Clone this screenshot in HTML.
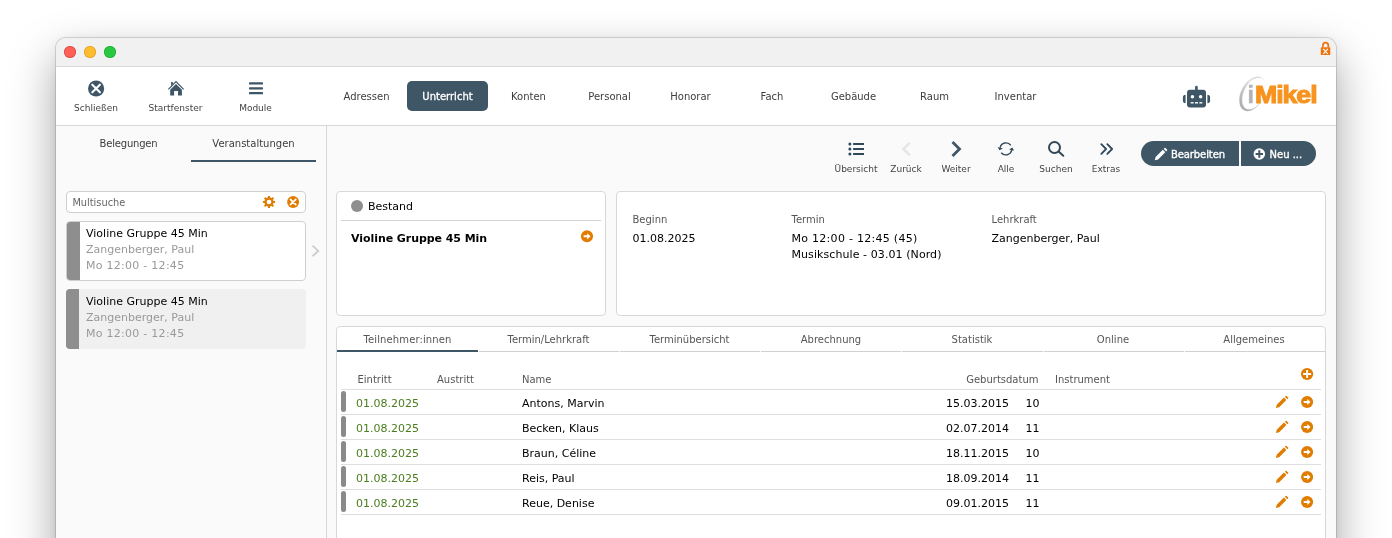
<!DOCTYPE html>
<html lang="de">
<head>
<meta charset="utf-8">
<title>iMikel – Unterricht</title>
<style>
*{box-sizing:border-box;margin:0;padding:0}
html,body{width:1392px;height:538px;overflow:hidden;background:#fff}
body{font-family:"DejaVu Sans","Liberation Sans",sans-serif;font-size:11px;color:#000;position:relative}
.abs{position:absolute}
#win{position:absolute;left:56px;top:38px;width:1280px;height:620px;background:#fafafa;border-radius:10px;
 box-shadow:0 0 0 1px rgba(0,0,0,.13),0 19px 46px rgba(0,0,0,.36),0 0 8px rgba(0,0,0,.05);overflow:hidden}
#title{position:absolute;left:0;top:0;width:100%;height:29px;background:#f1f1f1;border-bottom:1px solid #d9d9d9}
.tl{position:absolute;top:8px;width:12px;height:12px;border-radius:50%}
#bar{position:absolute;left:0;top:29px;width:100%;height:59px;background:#fff;border-bottom:1px solid #d8d8d8}
#side{position:absolute;left:0;top:88px;width:271px;height:540px;background:#fafafa;border-right:1px solid #d8d8d8}
.lbl{position:absolute;white-space:nowrap;transform:translate(-50%,-50%);line-height:1}
.t{position:absolute;white-space:nowrap;line-height:1;transform:translateY(-50%)}
.tb{font-size:9px;color:#444}
.mod{font-size:10px;color:#3d3d3d}
.panel{position:absolute;background:#fff;border:1px solid #d8d8d8;border-radius:4px}
.g{color:#555;font-size:10px}
.row{position:absolute;left:285px;width:980px;height:25px;border-bottom:1px solid #dedede}
.row i{position:absolute;left:0;top:1px;width:5px;height:21px;border-radius:2.5px;background:#8a8a8a}
.grn{color:#4b7d1e}
svg{position:absolute;overflow:visible}
</style>
</head>
<body>
<div id="win">
 <div id="title">
  <div class="tl" style="left:8px;background:#ff5f57;box-shadow:inset 0 0 0 .6px rgba(190,50,40,.7)"></div>
  <div class="tl" style="left:28px;background:#febc2e;box-shadow:inset 0 0 0 .6px rgba(200,140,20,.7)"></div>
  <div class="tl" style="left:48px;background:#28c840;box-shadow:inset 0 0 0 .6px rgba(20,150,35,.7)"></div>
 </div>
 <div id="bar"></div>
 <div id="side"></div>
</div>

<!-- everything below is positioned in page coordinates -->
<div id="layer" class="abs" style="left:0;top:0;width:1392px;height:538px;overflow:hidden;will-change:transform">

<!-- left toolbar -->
<span class="lbl tb" style="left:96px;top:108px">Schließen</span>
<span class="lbl tb" style="left:175.5px;top:108px">Startfenster</span>
<span class="lbl tb" style="left:255.5px;top:108px">Module</span>

<!-- module tabs -->
<span class="lbl mod" style="left:366.5px;top:96.5px">Adressen</span>
<div class="abs" style="left:407px;top:81px;width:81px;height:30px;background:#3f5666;border-radius:5px"></div>
<span class="lbl mod" style="left:447.5px;top:96.5px;color:#fff;-webkit-text-stroke:.3px #fff">Unterricht</span>
<span class="lbl mod" style="left:528.5px;top:96.5px">Konten</span>
<span class="lbl mod" style="left:609.5px;top:96.5px">Personal</span>
<span class="lbl mod" style="left:690.5px;top:96.5px">Honorar</span>
<span class="lbl mod" style="left:772px;top:96.5px">Fach</span>
<span class="lbl mod" style="left:853.5px;top:96.5px">Gebäude</span>
<span class="lbl mod" style="left:934.5px;top:96.5px">Raum</span>
<span class="lbl mod" style="left:1015.5px;top:96.5px">Inventar</span>

<!-- sidebar tabs -->
<span class="lbl" style="left:128.5px;top:144px;color:#3c3c3c;font-size:10px;letter-spacing:-.18px">Belegungen</span>
<span class="lbl" style="left:253.5px;top:144px;color:#3c3c3c;font-size:10px">Veranstaltungen</span>
<div class="abs" style="left:191px;top:160px;width:125px;height:2px;background:#3f5666"></div>

<!-- search -->
<div class="abs" style="left:66px;top:191px;width:240px;height:22px;background:#fff;border:1px solid #cfcfcf;border-radius:4px"></div>
<span class="t" style="left:72.4px;top:202.5px;font-size:9.8px;color:#666">Multisuche</span>

<!-- cards -->
<div class="abs" style="left:66px;top:221px;width:240px;height:60px;background:#fff;border:1px solid #cfcfcf;border-radius:4px;overflow:hidden"><div style="width:13px;height:100%;background:#8e8e8e"></div></div>
<span class="t" style="left:86px;top:233px">Violine Gruppe 45 Min</span>
<span class="t" style="left:86px;top:249px;color:#999">Zangenberger, Paul</span>
<span class="t" style="left:86px;top:265px;color:#999;letter-spacing:.27px">Mo 12:00 - 12:45</span>
<div class="abs" style="left:66px;top:289px;width:240px;height:60px;background:#f0f0f0;border-radius:4px;overflow:hidden"><div style="width:13px;height:100%;background:#8e8e8e"></div></div>
<span class="t" style="left:86px;top:301px">Violine Gruppe 45 Min</span>
<span class="t" style="left:86px;top:317px;color:#999">Zangenberger, Paul</span>
<span class="t" style="left:86px;top:333px;color:#999;letter-spacing:.27px">Mo 12:00 - 12:45</span>

<!-- right toolbar -->
<span class="lbl tb" style="left:856px;top:169px;">Übersicht</span>
<span class="lbl tb" style="left:906px;top:169px;">Zurück</span>
<span class="lbl tb" style="left:956px;top:169px;">Weiter</span>
<span class="lbl tb" style="left:1006px;top:169px;">Alle</span>
<span class="lbl tb" style="left:1056px;top:169px;">Suchen</span>
<span class="lbl tb" style="left:1106px;top:169px;">Extras</span>

<div class="abs" style="left:1141px;top:141px;width:98px;height:25px;background:#3f5666;border-radius:12.5px 0 0 12.5px"></div>
<div class="abs" style="left:1241px;top:141px;width:75px;height:25px;background:#3f5666;border-radius:0 12.5px 12.5px 0"></div>
<span class="t" style="left:1171px;top:154.6px;color:#fff;font-size:10px;-webkit-text-stroke:.35px #fff;letter-spacing:-.1px">Bearbeiten</span>
<span class="t" style="left:1269.5px;top:154.6px;color:#fff;font-size:10px;-webkit-text-stroke:.35px #fff">Neu ...</span>

<!-- Bestand panel -->
<div class="panel" style="left:336px;top:191px;width:270px;height:125px"></div>
<div class="abs" style="left:351px;top:199.7px;width:12px;height:12px;border-radius:50%;background:#8e8e8e"></div>
<span class="t" style="left:368px;top:205.7px">Bestand</span>
<div class="abs" style="left:341px;top:220px;width:260px;height:1px;background:#d4d4d4"></div>
<span class="t" style="left:351px;top:237.5px;font-weight:bold;letter-spacing:-.06px">Violine Gruppe 45 Min</span>

<!-- Info panel -->
<div class="panel" style="left:616px;top:191px;width:710px;height:125px"></div>
<span class="t g" style="left:632.5px;top:219.5px">Beginn</span>
<span class="t" style="left:632.5px;top:237.5px">01.08.2025</span>
<span class="t g" style="left:791.5px;top:219.5px">Termin</span>
<span class="t" style="left:791.5px;top:237.5px;letter-spacing:.28px">Mo 12:00 - 12:45 (45)</span>
<span class="t" style="left:791.5px;top:253.5px;letter-spacing:.08px">Musikschule - 03.01 (Nord)</span>
<span class="t g" style="left:991.5px;top:219.5px">Lehrkraft</span>
<span class="t" style="left:991.5px;top:237.5px">Zangenberger, Paul</span>

<!-- Tab panel -->
<div class="panel" style="left:336px;top:326px;width:990px;height:300px"></div>
<span class="lbl g" style="left:407.5px;top:339.5px;letter-spacing:.12px">Teilnehmer:innen</span>
<span class="lbl g" style="left:548.5px;top:339.5px">Termin/Lehrkraft</span>
<span class="lbl g" style="left:689.5px;top:339.5px">Terminübersicht</span>
<span class="lbl g" style="left:831px;top:339.5px">Abrechnung</span>
<span class="lbl g" style="left:972px;top:339.5px">Statistik</span>
<span class="lbl g" style="left:1113px;top:339.5px">Online</span>
<span class="lbl g" style="left:1254px;top:339.5px">Allgemeines</span>
<div class="abs" style="left:337px;top:350px;width:141px;height:2px;background:#3f5666"></div>
<div class="abs" style="left:479px;top:351px;width:140px;height:1px;background:#d0d0d0"></div>
<div class="abs" style="left:620px;top:351px;width:140px;height:1px;background:#d0d0d0"></div>
<div class="abs" style="left:761px;top:351px;width:140px;height:1px;background:#d0d0d0"></div>
<div class="abs" style="left:902px;top:351px;width:141px;height:1px;background:#d0d0d0"></div>
<div class="abs" style="left:1044px;top:351px;width:140px;height:1px;background:#d0d0d0"></div>
<div class="abs" style="left:1185px;top:351px;width:140px;height:1px;background:#d0d0d0"></div>

<!-- Table header -->
<span class="t g" style="left:357.5px;top:380px">Eintritt</span>
<span class="t g" style="left:437px;top:380px">Austritt</span>
<span class="t g" style="left:522px;top:380px">Name</span>
<span class="t g" style="left:1038.5px;top:380px;transform:translate(-100%,-50%)">Geburtsdatum</span>
<span class="t g" style="left:1055px;top:380px">Instrument</span>
<div class="abs" style="left:341px;top:389px;width:980px;height:1px;background:#dedede"></div>

<!-- rows -->
<div class="row" style="top:390px;left:341px"><i></i></div>
<div class="row" style="top:415px;left:341px"><i></i></div>
<div class="row" style="top:440px;left:341px"><i></i></div>
<div class="row" style="top:465px;left:341px"><i></i></div>
<div class="row" style="top:490px;left:341px"><i></i></div>
<span class="t grn" style="left:356px;top:402.5px">01.08.2025</span><span class="t" style="left:522px;top:402.5px">Antons, Marvin</span><span class="t" style="left:946px;top:402.5px">15.03.2015</span><span class="t" style="left:1025.5px;top:402.5px">10</span>
<span class="t grn" style="left:356px;top:427.5px">01.08.2025</span><span class="t" style="left:522px;top:427.5px">Becken, Klaus</span><span class="t" style="left:946px;top:427.5px">02.07.2014</span><span class="t" style="left:1025.5px;top:427.5px">11</span>
<span class="t grn" style="left:356px;top:452.5px">01.08.2025</span><span class="t" style="left:522px;top:452.5px">Braun, Céline</span><span class="t" style="left:946px;top:452.5px">18.11.2015</span><span class="t" style="left:1025.5px;top:452.5px">10</span>
<span class="t grn" style="left:356px;top:477.5px">01.08.2025</span><span class="t" style="left:522px;top:477.5px">Reis, Paul</span><span class="t" style="left:946px;top:477.5px">18.09.2014</span><span class="t" style="left:1025.5px;top:477.5px">11</span>
<span class="t grn" style="left:356px;top:502.5px">01.08.2025</span><span class="t" style="left:522px;top:502.5px">Reue, Denise</span><span class="t" style="left:946px;top:502.5px">09.01.2015</span><span class="t" style="left:1025.5px;top:502.5px">11</span>


<!-- logo -->
<svg width="1392" height="538" viewBox="0 0 1392 538" style="left:0;top:0">
 <defs><linearGradient id="sw" x1=".2" y1="1" x2=".5" y2="0"><stop offset="0" stop-color="#a6a6a6"/><stop offset=".35" stop-color="#c4c4c4"/><stop offset=".7" stop-color="#e4e4e4"/><stop offset="1" stop-color="#d6d6d6"/></linearGradient></defs>
 <g transform="translate(1252.5,93.8) rotate(27)">
  <path fill="url(#sw)" fill-rule="evenodd" d="M0 -18.5A11.5 18.5 0 1 0 0 18.5A11.5 18.5 0 1 0 0 -18.5zM1.1 -17.9A10 17 0 1 1 1.1 16.1A10 17 0 1 1 1.1 -17.9z"/>
 </g>
</svg>
<span class="abs" id="logo-i" style="left:1247.6px;top:83.6px;font-family:'Liberation Sans',sans-serif;font-weight:bold;font-size:23.2px;line-height:1;color:#b2b2b6;white-space:nowrap;-webkit-text-stroke:.4px #b2b2b6">i</span>
<span class="abs" id="logo-m" style="left:1254.8px;top:83.6px;font-family:'Liberation Sans',sans-serif;font-weight:bold;font-size:23.2px;line-height:1;color:#f7931e;white-space:nowrap;letter-spacing:-.9px;-webkit-text-stroke:1px #f7931e;transform-origin:0 0;transform:scaleX(1.15)">Mikel</span>

<!-- icons -->
<svg width="1392" height="538" viewBox="0 0 1392 538" style="left:0;top:0">
<g id="ic-top" fill="#3f5666" stroke="none">
 <circle cx="96.1" cy="88.5" r="8.05"/>
 <path d="M92.3 84.7l7.6 7.6M99.9 84.7l-7.6 7.6" stroke="#fff" stroke-width="2.1" stroke-linecap="round" fill="none"/>
 <path d="M170.2 95.6V89.7L176 83.9l5.9 5.8v5.9H178V90.9h-3.9v4.7z"/>
 <path d="M171.1 82.1h1.8v2.2l-1.8 1.8z"/>
 <path d="M168.4 89.3L176 81.7l7.6 7.6" stroke="#3f5666" stroke-width="1.2" fill="none"/>
 <rect x="249" y="82.3" width="14" height="2.2" rx=".6"/><rect x="249" y="87.2" width="14" height="2.2" rx=".6"/><rect x="249" y="92.1" width="14" height="2.2" rx=".6"/>
</g>
<g id="ic-robot" fill="#3f5666">
 <rect x="1187" y="89.8" width="19" height="17.6" rx="3"/>
 <rect x="1195.1" y="85.8" width="2.6" height="5" rx="1.3"/>
 <path d="M1185.6 94.7v8.6a2.7 2.7 0 0 1-2.7-2.7v-3.2a2.7 2.7 0 0 1 2.7-2.7zM1207.4 94.7v8.6a2.7 2.7 0 0 0 2.7-2.7v-3.2a2.7 2.7 0 0 0-2.7-2.7z"/>
 <circle cx="1192.4" cy="96.7" r="1.75" fill="#fff"/><circle cx="1200.6" cy="96.7" r="1.75" fill="#fff"/>
 <rect x="1190.7" y="102.1" width="2.9" height="1.4" fill="#fff"/><rect x="1195" y="102.1" width="3" height="1.4" fill="#fff"/><rect x="1199.4" y="102.1" width="2.9" height="1.4" fill="#fff"/>
</g>
<g id="ic-nav" fill="#2f485a" stroke="none">
 <circle cx="849.9" cy="144" r="1.5"/><circle cx="849.9" cy="149" r="1.5"/><circle cx="849.9" cy="154" r="1.5"/>
 <rect x="853.1" y="143" width="10.9" height="2"/><rect x="853.1" y="148" width="10.9" height="2"/><rect x="853.1" y="153" width="10.9" height="2"/>
 <path d="M909.9 142.6L903.4 149l6.5 6.4" stroke="#e6e6e6" stroke-width="2.6" fill="none"/>
 <path d="M952.5 142L959.5 149l-7 7" stroke="#3f5666" stroke-width="2.8" fill="none"/>
 <path d="M1010.8 145.2A6.1 6.1 0 0 0 1000.1 147.6M1001.2 152.7A6.1 6.1 0 0 0 1011.8 150.2" stroke="#2f485a" stroke-width="1.4" fill="none"/>
 <path d="M997.8 147l5.1 1.4-3.5 1.9zM1014.1 150.7l-5-1.3 3.3-1.8z"/>
 <circle cx="1054.5" cy="147.5" r="5.5" stroke="#2f485a" stroke-width="2" fill="none"/>
 <path d="M1058.6 151.6l4.7 4.2" stroke="#2f485a" stroke-width="2" stroke-linecap="round" fill="none"/>
 <path d="M1101.3 144.2l4.8 4.8-4.8 4.8M1107.3 144.2l4.8 4.8-4.8 4.8" stroke="#2f485a" stroke-width="1.8" stroke-linecap="round" stroke-linejoin="round" fill="none"/>
</g>
<g id="ic-btn" fill="#fff">
 <path transform="translate(1154.8,148)" d="M0 12.3l.8-3.3 7.2-7.2 2.5 2.5-7.2 7.2zM8.9 .9l.8-.8a.7.7 0 0 1 1 0l1.5 1.5a.7.7 0 0 1 0 1l-.8.8z"/>
 <circle cx="1259.3" cy="154" r="5.75"/>
 <path d="M1259.3 150.3v7.4M1255.6 154h7.4" stroke="#3f5666" stroke-width="2" fill="none"/>
</g>
<g id="ic-orange" fill="#e07c00">
 <g transform="translate(269,202)"><circle r="3.5" fill="none" stroke="#e07c00" stroke-width="2.3"/><rect x="-1.05" y="-6.1" width="2.1" height="2.4" rx=".3" transform="rotate(0)"/><rect x="-1.05" y="-6.1" width="2.1" height="2.4" rx=".3" transform="rotate(45)"/><rect x="-1.05" y="-6.1" width="2.1" height="2.4" rx=".3" transform="rotate(90)"/><rect x="-1.05" y="-6.1" width="2.1" height="2.4" rx=".3" transform="rotate(135)"/><rect x="-1.05" y="-6.1" width="2.1" height="2.4" rx=".3" transform="rotate(180)"/><rect x="-1.05" y="-6.1" width="2.1" height="2.4" rx=".3" transform="rotate(225)"/><rect x="-1.05" y="-6.1" width="2.1" height="2.4" rx=".3" transform="rotate(270)"/><rect x="-1.05" y="-6.1" width="2.1" height="2.4" rx=".3" transform="rotate(315)"/></g>
 <circle cx="293.1" cy="202" r="6"/>
 <path d="M290.4 199.3l5.4 5.4M295.8 199.3l-5.4 5.4" stroke="#fff" stroke-width="1.65" stroke-linecap="round" fill="none"/>
 <g transform="translate(587,236.3)"><circle r="6.05"/><path fill="#fff" d="M-3.4 -1h3.6v-2.1l3.3 3.1-3.3 3.1v-2.1h-3.6z"/></g>
 <g transform="translate(1307.1,374)"><circle r="6.1"/><path d="M0 -4v8M-4 0h8" stroke="#fff" stroke-width="1.9" fill="none"/></g>
 <g transform="translate(1307.1,402)"><circle r="6.05"/><path fill="#fff" d="M-3.4 -1h3.6v-2.1l3.3 3.1-3.3 3.1v-2.1h-3.6z"/></g>
 <g transform="translate(1307.1,427)"><circle r="6.05"/><path fill="#fff" d="M-3.4 -1h3.6v-2.1l3.3 3.1-3.3 3.1v-2.1h-3.6z"/></g>
 <g transform="translate(1307.1,452)"><circle r="6.05"/><path fill="#fff" d="M-3.4 -1h3.6v-2.1l3.3 3.1-3.3 3.1v-2.1h-3.6z"/></g>
 <g transform="translate(1307.1,477)"><circle r="6.05"/><path fill="#fff" d="M-3.4 -1h3.6v-2.1l3.3 3.1-3.3 3.1v-2.1h-3.6z"/></g>
 <g transform="translate(1307.1,502)"><circle r="6.05"/><path fill="#fff" d="M-3.4 -1h3.6v-2.1l3.3 3.1-3.3 3.1v-2.1h-3.6z"/></g>
 <path transform="translate(1275.9,395.8)" d="M0 12.3l.8-3.3 7.2-7.2 2.5 2.5-7.2 7.2zM8.9 .9l.8-.8a.7.7 0 0 1 1 0l1.5 1.5a.7.7 0 0 1 0 1l-.8.8z"/>
 <path transform="translate(1275.9,420.8)" d="M0 12.3l.8-3.3 7.2-7.2 2.5 2.5-7.2 7.2zM8.9 .9l.8-.8a.7.7 0 0 1 1 0l1.5 1.5a.7.7 0 0 1 0 1l-.8.8z"/>
 <path transform="translate(1275.9,445.8)" d="M0 12.3l.8-3.3 7.2-7.2 2.5 2.5-7.2 7.2zM8.9 .9l.8-.8a.7.7 0 0 1 1 0l1.5 1.5a.7.7 0 0 1 0 1l-.8.8z"/>
 <path transform="translate(1275.9,470.8)" d="M0 12.3l.8-3.3 7.2-7.2 2.5 2.5-7.2 7.2zM8.9 .9l.8-.8a.7.7 0 0 1 1 0l1.5 1.5a.7.7 0 0 1 0 1l-.8.8z"/>
 <path transform="translate(1275.9,495.8)" d="M0 12.3l.8-3.3 7.2-7.2 2.5 2.5-7.2 7.2zM8.9 .9l.8-.8a.7.7 0 0 1 1 0l1.5 1.5a.7.7 0 0 1 0 1l-.8.8z"/>
</g>
<path d="M312.6 245.6l5.6 5.3-5.6 5.3" stroke="#cdcdcd" stroke-width="1.9" fill="none"/>
<g id="ic-lock" fill="#ee7410">
 <rect x="1320.8" y="47.2" width="9.5" height="7.8" rx=".6"/>
 <path d="M1322.9 47.6v-2.2a2.7 2.7 0 0 1 5.4 0v2.2" stroke="#ee7410" stroke-width="1.7" fill="none"/>
 <path d="M1323.3 48.8l4.5 5.2M1327.8 48.8l-4.5 5.2" stroke="#fff" stroke-width="1.1" fill="none"/>
</g>
</svg>

</div>
</body>
</html>
